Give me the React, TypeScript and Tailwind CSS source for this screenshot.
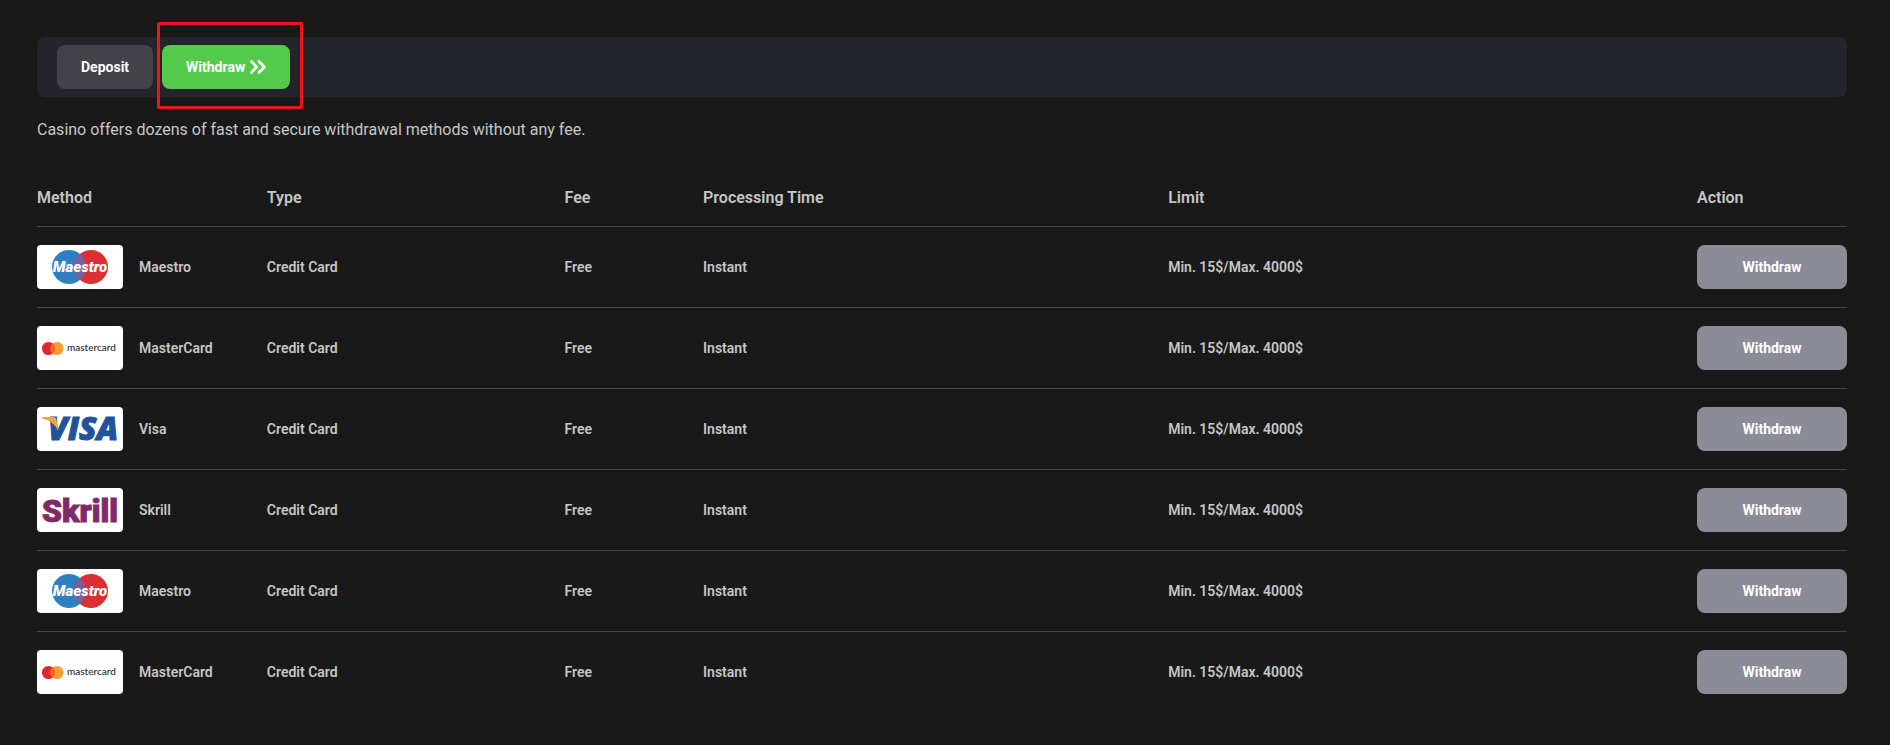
import { useState } from 'react'
import clsx from 'clsx'

type Tab = 'deposit' | 'withdraw'
type Brand = 'maestro' | 'mastercard' | 'visa' | 'skrill'

interface PaymentMethod {
  brand: Brand
  name: string
  type: string
  fee: string
  time: string
  limit: string
}

const card = { type: 'Credit Card', fee: 'Free', time: 'Instant', limit: 'Min. 15$/Max. 4000$' }

const methods: PaymentMethod[] = [
  { brand: 'maestro', name: 'Maestro', ...card },
  { brand: 'mastercard', name: 'MasterCard', ...card },
  { brand: 'visa', name: 'Visa', ...card },
  { brand: 'skrill', name: 'Skrill', ...card },
  { brand: 'maestro', name: 'Maestro', ...card },
  { brand: 'mastercard', name: 'MasterCard', ...card },
]

function MaestroLogo() {
  return (
    <svg viewBox="0 0 86 44" className="w-full h-full" aria-hidden="true">
      <circle cx="32" cy="22" r="17" fill="#2f80c3" />
      <circle cx="54" cy="22" r="17" fill="#dc2f34" />
      <path d="M43 9a17 17 0 0 1 0 26a17 17 0 0 1 0-26z" fill="#79609a" />
      <text
        x="43"
        y="27"
        textAnchor="middle"
        fill="#fff"
        className="font-['Roboto'] text-[15px] font-black italic"
      >
        Maestro
      </text>
    </svg>
  )
}

function MasterCardLogo() {
  return (
    <svg viewBox="0 0 86 44" className="w-full h-full" aria-hidden="true">
      <circle cx="11.5" cy="22.5" r="6.6" fill="#e3262d" />
      <circle cx="20" cy="22.5" r="6.6" fill="#f0a030" />
      <path d="M15.8 17.4a6.6 6.6 0 0 1 0 10.2a6.6 6.6 0 0 1 0-10.2z" fill="#ee6425" />
      <text x="30" y="25" fill="#2a2a2a" className="font-['Lato'] text-[10px] font-medium">
        mastercard
      </text>
    </svg>
  )
}

function VisaLogo() {
  return (
    <svg viewBox="0 0 86 44" className="w-full h-full" aria-hidden="true">
      <text
        x="11"
        y="33"
        fill="#22529a"
        stroke="#22529a"
        strokeWidth="1"
        className="font-['Open_Sans'] text-[32px] font-extrabold italic"
      >
        VISA
      </text>
      <path d="M5 10h11c2 0 3 .8 3.400 2.600l2 11C18 17 12 12.800 5 11.400z" fill="#e8a93a" />
    </svg>
  )
}

function SkrillLogo() {
  return (
    <svg viewBox="0 0 86 44" className="w-full h-full" aria-hidden="true">
      <text
        x="43"
        y="34"
        textAnchor="middle"
        fill="#812a69"
        stroke="#812a69"
        strokeWidth="1"
        className="font-['Roboto'] text-[32px] font-black"
      >
        Skrill
      </text>
    </svg>
  )
}

const logos: Record<Brand, React.ElementType> = {
  maestro: MaestroLogo,
  mastercard: MasterCardLogo,
  visa: VisaLogo,
  skrill: SkrillLogo,
}

function DoubleChevron() {
  return (
    <svg
      viewBox="0 0 16 14"
      className="w-4 h-3.5"
      fill="none"
      stroke="currentColor"
      strokeWidth="2.8"
      strokeLinecap="round"
      strokeLinejoin="round"
      aria-hidden="true"
    >
      <path d="M1.600 1.600L6.600 7l-5 5.400M9 1.600L14.400 7L9 12.400" />
    </svg>
  )
}

export default function App() {
  const [activeTab, setActiveTab] = useState<Tab>('withdraw')

  return (
    <main className="min-h-screen bg-[#191919] pl-[37px] pr-[43px] pt-[37px] pb-8 font-['Roboto',sans-serif] text-[#c6c6c6]">
      <nav className="flex items-center gap-[9px] h-15 px-5 rounded-lg bg-[#24242c]">
        <button
          type="button"
          onClick={() => setActiveTab('deposit')}
          className="h-11 px-6 rounded-lg bg-[#434249] text-sm font-bold text-white"
        >
          Deposit
        </button>
        <div className="relative">
          <button
            type="button"
            onClick={() => setActiveTab('withdraw')}
            className="flex items-center gap-[5px] h-11 px-6 rounded-lg bg-[#55ca4a] text-sm font-bold text-white"
          >
            Withdraw
            <DoubleChevron />
          </button>
          {/* Highlight frame around the active tab */}
          <span
            className={clsx(
              'absolute -left-[5px] -right-[13px] -top-[23px] -bottom-5 rounded-xs border-3 border-[#ee1515] pointer-events-none',
              activeTab !== 'withdraw' && 'hidden',
            )}
          />
        </div>
      </nav>

      <p className="mt-5 text-base leading-[26px]">
        Casino offers dozens of fast and secure withdrawal methods without any fee.
      </p>

      <table className="mt-7 w-full table-fixed text-left">
        <colgroup>
          <col className="w-[12.7%]" />
          <col className="w-[16.45%]" />
          <col className="w-[7.65%]" />
          <col className="w-[25.7%]" />
          <col />
          <col className="w-[150px]" />
        </colgroup>
        <thead>
          <tr className="h-[55px] text-base">
            <th className="p-0 font-semibold">Method</th>
            <th className="p-0 font-semibold">Type</th>
            <th className="p-0 font-semibold">Fee</th>
            <th className="p-0 font-semibold">Processing Time</th>
            <th className="p-0 font-semibold">Limit</th>
            <th className="p-0 font-semibold">Action</th>
          </tr>
        </thead>
        <tbody className="text-sm font-semibold">
          {methods.map((method, i) => {
            const Logo = logos[method.brand]
            return (
              <tr key={i} className="h-[81px] border-t border-[#464646]">
                <td className="p-0">
                  <div className="flex items-center gap-4">
                    <span className="w-[86px] h-11 shrink-0 overflow-hidden rounded bg-white">
                      <Logo />
                    </span>
                    {method.name}
                  </div>
                </td>
                <td className="p-0">{method.type}</td>
                <td className="p-0">{method.fee}</td>
                <td className="p-0">{method.time}</td>
                <td className="p-0">{method.limit}</td>
                <td className="p-0">
                  <button
                    type="button"
                    className="block w-full h-11 rounded-lg bg-[#8c8c99] text-sm font-bold text-white"
                  >
                    Withdraw
                  </button>
                </td>
              </tr>
            )
          })}
        </tbody>
      </table>
    </main>
  )
}
